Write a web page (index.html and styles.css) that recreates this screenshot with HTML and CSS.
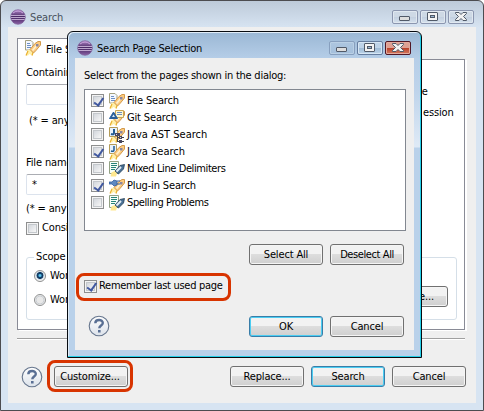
FILE: index.html
```html
<!DOCTYPE html>
<html lang="en">
<head>
<meta charset="utf-8">
<title>Search</title>
<link rel="stylesheet" href="styles.css">
</head>
<body>
<svg class="defs" width="0" height="0" aria-hidden="true">
  <defs>
    <linearGradient id="orbfill" x2="0" y2="1"><stop stop-color="#b58acb"/><stop offset=".5" stop-color="#44245f"/><stop offset="1" stop-color="#8b62a6"/></linearGradient>
    <linearGradient id="helpfill" x2="0" y2="1"><stop stop-color="#fff"/><stop offset="1" stop-color="#dce2ea"/></linearGradient>
    <symbol id="orb" viewBox="0 0 16 16"><circle cx="8" cy="8" r="7.3" fill="url(#orbfill)" stroke="#80609a" stroke-width=".7"/><path d="M1 6.500h14M1 8.500h14M1.500 10.500h13" stroke="#d9c5e6" stroke-width=".8"/><path d="M3 4q5-4 10 0" fill="none" stroke="#c8a4dc"/></symbol>
    <symbol id="min" viewBox="0 0 26 14"><rect x="7.5" y="6.5" width="10" height="4" rx=".5" fill="#ddd" stroke="#515a68"/></symbol>
    <symbol id="max" viewBox="0 0 26 14"><rect x="7.5" y="2.5" width="10" height="8" rx=".5" fill="#f3f3f3" stroke="#515a68"/><rect x="10.5" y="5.5" width="4" height="2" fill="#9bb6d2" stroke="#515a68"/></symbol>
    <symbol id="close" viewBox="0 0 26 14"><path d="M7.500 2.500h3.500l2 2 2-2h3.500v1l-3 3 3 3v1h-3.500l-2-2-2 2H7.500v-1l3-3-3-3z" fill="#f2f2f2" stroke="#515a68"/></symbol>
    <symbol id="rocket" viewBox="0 0 16 16"><path d="M1 15.500L2.500 10l3-.5L9 12.500l-1.500 3-3-1.500-1.500 1.500z" fill="#fff0a8"/><path d="M1 15.500l2-4.500M7 15.500l1-3" stroke="#eab030" stroke-width="1.200"/><path d="M5 9.500L10 3.500l3-2h2.500v3.500L11 10.500 8.500 13z" fill="#fbca80" stroke="#d39a4a" stroke-width="1"/><path d="M7.500 10.500l5-6" stroke="#fff0cc" stroke-width="1.800"/><path d="M11 4h2.500v2.500H11z" fill="#8a86a0"/></symbol>
    <symbol id="file" viewBox="0 0 16 16"><path d="M.5.500h5.500l2 2v7.500H.5z" fill="#f4f8fe" stroke="#a5a17f"/><path d="M2 3.500h3M2 5.500h4M2 7.500h4" stroke="#6d8fc4"/><use href="#rocket"/></symbol>
    <symbol id="git" viewBox="0 0 16 16"><use href="#rocket"/><path d="M6.500.5h8v7h-8z" fill="#fff8d0" stroke="#c9a659"/><path d="M8 2.500h5M8 4.500h5" stroke="#6d8fc4"/><path d="M.5 8.500l4-6.500 4 6.500z" fill="#295f9b" stroke="#295f9b"/><path d="M3 7l1.500-2.500L6 7z" fill="#d7e8f8"/></symbol>
    <symbol id="ast" viewBox="0 0 16 16"><use href="#rocket"/><path d="M.5.500h8v9h-8z" fill="#e8f2fc" stroke="#b49c58"/><path d="M5 2v4q0 2-3 1" fill="none" stroke="#205b93" stroke-width="2"/><path d="M8.500 7v8M8 10.500h7M8 14.500h7" stroke="#444"/><path d="M6 6h5v3H6zM10 9h3v3h-3zM10 13h3v3h-3z" fill="#48465e"/><path d="M7 7h1v1H7zM11 10h1v1h-1z" fill="#d4d4e8"/></symbol>
    <symbol id="java" viewBox="0 0 16 16"><path d="M.5.500h7v9h-7z" fill="#e7f2fd" stroke="#b49c58"/><path d="M5 2v4q0 2-3 1" fill="none" stroke="#205b93" stroke-width="1.500"/><use href="#rocket"/></symbol>
    <symbol id="plug" viewBox="0 0 16 16"><use href="#rocket"/><path d="M0 4h3l2-2 3 1v4L5 8 3 6H0z" fill="#5d89c2" stroke="#365f9e" stroke-width=".8"/><path d="M8 3h3M8 6h3" stroke="#365f9e"/></symbol>
    <symbol id="lines" viewBox="0 0 16 16"><path d="M.5.500h9v12h-9z" fill="#f7fff9" stroke="#93a284"/><path d="M2 2.500h6M2 4.500h6M2 6.500h5M2 8.500h4" stroke="#278377"/><path d="M1.500 15.500l1-4 4-2 1.500 3-1 3z" fill="#ffe88f"/><path d="M6 10l5-5.500 4.500-1-1 4.500-5 5z" fill="#4a7196" stroke="#243f57" stroke-width=".8"/><path d="M7.500 10.500l4.500-4.500" stroke="#e2edf5" stroke-width="2"/></symbol>
    <symbol id="help" viewBox="0 0 22 22"><circle cx="11" cy="11" r="9.800" fill="url(#helpfill)" stroke="#65758d" stroke-width="1.100"/><path d="M7.300 8.200c.1-4.200 7.500-4.200 7.500-.2 0 2.600-3.500 2.500-3.500 5.200" fill="none" stroke="#596f94" stroke-width="2.400"/><path d="M10 15h2.600v2.500H10z" fill="#596f94"/></symbol>
  </defs>
</svg>

<main class="window">
  <header class="titlebar">
    <svg class="orb"><use href="#orb"/></svg><span class="title">Search</span>
    <div class="controls"><i class="ctl"><svg><use href="#min"/></svg></i><i class="ctl"><svg><use href="#max"/></svg></i><i class="ctl"><svg><use href="#close"/></svg></i></div>
  </header>
  <section class="client">
    <div class="tab"><svg class="ico"><use href="#file"/></svg><span>File S</span></div>
    <div class="page">
      <div class="left">
        <p class="line containing">Containin</p>
        <div class="field"></div>
        <p class="line hint">(* = any</p>
        <p class="line filename">File name</p>
        <div class="field">*</div>
        <p class="line hint2">(* = any</p>
        <div class="consider"><i class="check"></i><span>Consi</span></div>
      </div>
      <div class="right"><p class="line case">ve</p><p class="line regex">ession</p></div>
      <fieldset class="scope">
        <legend>Scope</legend>
        <div class="radios"><div class="option"><i class="radio on"></i><span>Wor</span></div><div class="option"><i class="radio"></i><span>Wor</span></div></div>
        <div class="btn choose">e...</div>
      </fieldset>
    </div>
    <div class="rule"></div>
    <footer class="actions">
      <svg class="help"><use href="#help"/></svg>
      <div class="btn customize">Customize...<i class="ring ring-customize"></i></div>
      <div class="btn replace">Replace...</div><div class="btn primary">Search</div><div class="btn">Cancel</div>
    </footer>
  </section>
</main>

<section class="dialog">
  <header class="titlebar">
    <svg class="orb"><use href="#orb"/></svg><span class="title">Search Page Selection</span>
    <div class="controls"><i class="ctl dim"><svg><use href="#min"/></svg></i><i class="ctl"><svg><use href="#max"/></svg></i><i class="ctl red"><svg><use href="#close"/></svg></i></div>
  </header>
  <div class="body">
    <p class="line prompt">Select from the pages shown in the dialog:</p>
    <ul class="list">
      <li><i class="check on"></i><svg class="ico"><use href="#file"/></svg><span>File Search</span></li>
      <li><i class="check"></i><svg class="ico"><use href="#git"/></svg><span>Git Search</span></li>
      <li><i class="check"></i><svg class="ico"><use href="#ast"/></svg><span class="wide">Java AST Search</span></li>
      <li><i class="check on"></i><svg class="ico"><use href="#java"/></svg><span class="wide">Java Search</span></li>
      <li><i class="check"></i><svg class="ico"><use href="#lines"/></svg><span class="narrow">Mixed Line Delimiters</span></li>
      <li><i class="check on"></i><svg class="ico"><use href="#plug"/></svg><span>Plug-in Search</span></li>
      <li><i class="check"></i><svg class="ico"><use href="#lines"/></svg><span class="narrow">Spelling Problems</span></li>
    </ul>
    <div class="pair"><div class="btn">Select All</div><div class="btn narrow">Deselect All</div></div>
    <div class="remember"><i class="check on"></i><span>Remember last used page</span><i class="ring ring-remember"></i></div>
    <div class="bottom"><svg class="help"><use href="#help"/></svg><div class="pair"><div class="btn primary">OK</div><div class="btn">Cancel</div></div></div>
  </div>
</section>
</body>
</html>
```

FILE: styles.css
```css
* { box-sizing: border-box; }
body { margin: 0; width: 484px; height: 411px; overflow: hidden; position: relative; background: #fff; color: #000; font: 11px/14px "DejaVu Sans Condensed", "DejaVu Sans", sans-serif; font-stretch: condensed; letter-spacing: -.15px; }
p, ul { margin: 0; padding: 0; }
i { display: block; flex: none; font-style: normal; }
svg { display: block; flex: none; }
.defs { position: absolute; }
span, .line, legend, .btn { white-space: nowrap; }
.window { width: 484px; height: 411px; padding: 0 7px 7px; border: 1px solid #4c4c50; border-top-width: 1px; border-radius: 6px 6px 0 0; background: linear-gradient(#bdcad9, #d7e4f2 27px); }
.titlebar { display: flex; height: 26px; }
.orb { width: 16px; height: 16px; margin: 8px 0 0 2px; }
.title { margin: 10px 0 0 4px; color: #48515c; }
.controls { display: flex; gap: 2px; margin: 9px 2px 0 auto; }
.ctl { width: 26px; height: 14px; border: 1px solid #8b96af; border-radius: 2px; background: linear-gradient(#ced9e5 50%, #c2cfdf 50%, #d5e1ed); box-shadow: inset 0 0 0 1px #e0e8f0; }
.ctl svg { width: 26px; height: 14px; margin: -1px; }
.client { height: 376px; padding: 11px 9px 0; background: #efefef; }
.tab { display: flex; width: 80px; height: 21px; border: 1px solid #898b96; border-width: 1px 0 0 1px; background: #fff; padding: 1px 0 0 7px; }
.ico { width: 16px; height: 16px; }
.tab span { margin: 3px 0 0 5px; }
.page { display: grid; grid-template-columns: 380px 1fr; grid-template-rows: 191px 70px; width: 448px; height: 271px; padding: 0 7px 0 8px; border: 1px solid #898b96; border-top: 0; background: linear-gradient(#898b96, #898b96) 60px 0 / 400px 1px no-repeat #fff; box-shadow: 2px 1px #fff; }
.left { padding-top: 7px; }
.field { height: 21px; margin-top: 4px; padding: 3px 5px; border: 1px solid #dce3ed; border-top-color: #abadb3; border-radius: 2px; }
.hint { margin: 9px 0 0 3px; }
.filename { margin-top: 28px; }
.hint2 { margin-top: 7px; }
.consider { display: flex; align-items: center; margin-top: 5px; gap: 3px; }
.case { margin: 26px 0 0 10px; }
.regex { margin: 7px 0 0 17px; }
.scope { grid-column: 1 / 3; display: flex; justify-content: space-between; align-items: flex-start; height: 70px; min-width: 0; margin: 0; padding: 4px 8px 0 7px; border: 1px solid #d5dfe8; border-radius: 3px; }
.scope legend { padding: 0 3px 0 2px; }
.radios { display: grid; gap: 10px; padding-top: 1px; }
.option { display: flex; gap: 4px; align-items: center; height: 14px; }
.radio { width: 12px; height: 12px; border: 1px solid #8e8f8f; border-radius: 50%; background: radial-gradient(#e8e8e8 45%, #c5cacf 55%, #f6f6f6 70%); }
.radio.on { background: radial-gradient(circle at 50% 45%, #5bc6ef 0 12%, #123c65 28% 42%, #c8d7e2 50%, #f4f4f4 65%); }
.check { width: 13px; height: 13px; border: 1px solid #8e8f8f; background: linear-gradient(135deg, #c9ced5, #f6f6f6 80%); box-shadow: inset 0 0 0 1px #f4f4f4, inset 0 0 0 2px #c4c8cc; position: relative; }
.check.on::after { content: ""; position: absolute; left: 3.500px; top: .5px; width: 4px; height: 7.500px; border: solid #4058a0; border-width: 0 2px 2px 0; transform: rotate(35deg); }
.rule { width: 448px; height: 2px; margin-top: 8px; border-top: 1px solid #a0a0a0; border-bottom: 1px solid #fff; }
.actions { display: flex; margin: 26px 1px 0 4px; height: 22px; gap: 7px; }
.help { width: 22px; height: 22px; }
.btn { position: relative; width: 74px; height: 21px; border: 1px solid #707070; border-radius: 3px; background: linear-gradient(#f2f2f2 0 48%, #dddddd 50%, #cfcfcf); box-shadow: inset 0 0 0 1px #f5f5f5; text-align: center; line-height: 20px; }
.btn.primary { border-color: #397da8; box-shadow: inset 0 0 0 1px #4bcdf2; }
.actions .customize { margin-left: 4px; letter-spacing: -.15px; padding-right: 2px; }
.replace { margin-left: auto; }
.choose { margin-top: 18px; text-align: right; padding-right: 13px; }
.ring { position: absolute; border: 3px solid #d83400; border-radius: 8px; }
.ring-customize { left: -8px; top: -7px; width: 86px; height: 32px; }

.dialog { position: absolute; left: 67px; top: 31px; width: 355px; height: 327px; padding: 0 7px; border: 1px solid #070b10; border-radius: 6px 6px 0 0; background: linear-gradient(#9ab7d4, #b6cee8 27px, #bfd4eb 60px, #dfeaf6 115px, #b9d1ea 116px); box-shadow: inset -1px -1px #24cfe8, inset 1px 1px #e0ecf7; }
.dialog .title { color: #000; letter-spacing: -.22px; }
.dialog .controls { margin-right: 3px; }
.dialog .ctl { border-color: #667d9f; background: linear-gradient(#bed3e8 50%, #9ebad5 50%, #bdd4e9); box-shadow: inset 0 0 0 1px #d6e6f4; }
.dialog .ctl.dim { border-color: #879fbe; background: linear-gradient(#adc6df, #a5c0dc); box-shadow: inset 0 0 0 1px #bad0e5; }
.dialog .ctl.red { border-color: #511725; background: linear-gradient(#dea093 50%, #b83e29 50%, #d47c61); box-shadow: inset 0 0 0 1px #e4aa9e; }
.body { height: 292px; background: #efefef; padding: 11px 9px 0; }
.prompt { letter-spacing: -.24px; }
.list { width: 322px; height: 142px; margin-top: 6px; border: 1px solid #828790; background: #fff; padding: 2px 0 0 6px; list-style: none; }
.list li { display: flex; align-items: center; height: 17px; }
.list .ico { margin-left: 5px; }
.list span { margin-left: 2px; }
.narrow { letter-spacing: -.4px; }
.wide { letter-spacing: 0; }
.pair { display: flex; justify-content: flex-end; gap: 7px; margin: 13px 1px 0 0; }
.remember { position: relative; display: flex; width: 150px; align-items: center; gap: 2px; margin-top: 14px; height: 14px; letter-spacing: -.28px; }
.ring-remember { left: -8px; top: -6px; width: 155px; height: 28px; }
.bottom { display: flex; justify-content: space-between; margin: 22px 0 0 4px; }
.bottom .pair { margin-top: 1px; }
```
